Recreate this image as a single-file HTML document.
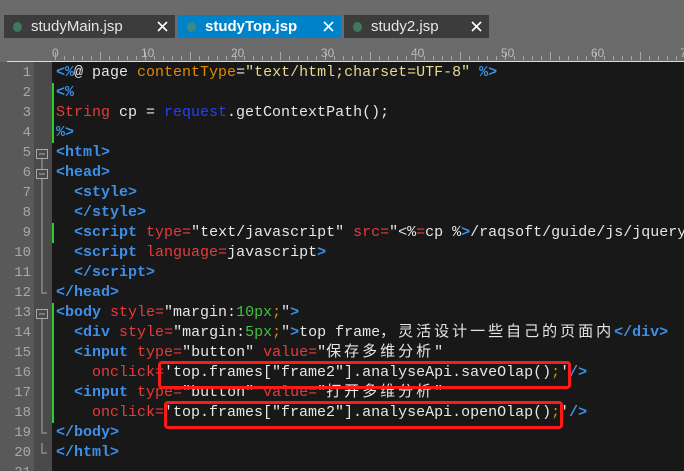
<!DOCTYPE html>
<html><head><meta charset="utf-8"><style>
html,body{margin:0;width:684px;height:471px;overflow:hidden}
body{background:#6b6b6b;font-family:"Liberation Sans","Noto Sans CJK SC",sans-serif;position:relative}
.tab{position:absolute;top:15px;height:23px;background:#3c3c3c;color:#e6e6e6;font-size:15px;line-height:23px}
.tab .dot{position:absolute;left:9px;top:7px;width:9px;height:10px;border-radius:50%;background:#3d7a5e}
.tab .t{position:absolute;left:27px}
.tab .x{position:absolute;right:7px;top:6px;width:11px;height:11px}
.act{background:#0082c8;font-weight:bold;color:#fff}
.act .dot{background:#3a8a8a}
#gut{position:absolute;left:0;top:62px;width:34px;height:409px;background:#595959}
#fold{position:absolute;left:34px;top:62px;width:18px;height:409px;background:#4a4a4a}
#code{position:absolute;left:52px;top:62px;width:632px;height:409px;background:#181818}
.ln{position:absolute;left:0;top:63px;width:31px;height:408px;overflow:hidden;text-align:right;color:#a8a8a8;font-family:"Liberation Mono",monospace;font-size:14px;line-height:20px}
.l{position:absolute;left:56px;white-space:pre;font-family:"Liberation Mono","Noto Sans CJK SC",monospace;font-size:15px;line-height:20px;color:#e6e6e6}
.tg{color:#3d8fe8;font-weight:bold}.a{color:#e83a3a}.o{color:#e08a00}.y{color:#e8d890}.g{color:#3fc43f}.b{color:#2440ff}.c{letter-spacing:3px}
.bar{position:absolute;left:52px;width:2px;background:#2ecc2e}
.box{position:absolute;border:3px solid #ff1a1a;border-radius:4px}
</style></head><body>
<div class="tab" style="left:4px;width:171px"><span class="dot"></span><span class="t">studyMain.jsp</span><svg class="x" viewBox="0 0 11 11"><path d="M1 1L10 10M10 1L1 10" stroke="#fff" stroke-width="1.6"/></svg></div>
<div class="tab act" style="left:178px;width:163px"><span class="dot"></span><span class="t">studyTop.jsp</span><svg class="x" viewBox="0 0 11 11"><path d="M1 1L10 10M10 1L1 10" stroke="#fff" stroke-width="1.6"/></svg></div>
<div class="tab" style="left:344px;width:145px"><span class="dot"></span><span class="t">study2.jsp</span><svg class="x" viewBox="0 0 11 11"><path d="M1 1L10 10M10 1L1 10" stroke="#fff" stroke-width="1.6"/></svg></div>
<svg style="position:absolute;left:0;top:40px" width="684" height="23">
<line x1="7" y1="21.5" x2="684" y2="21.5" stroke="#ddd"/>
<g fill="#bbb" font-family="Liberation Sans" font-size="12">
<text x="52" y="17">0</text><text x="141" y="17">10</text><text x="231" y="17">20</text><text x="321" y="17">30</text><text x="411" y="17">40</text><text x="501" y="17">50</text><text x="591" y="17">60</text><text x="680" y="17">7</text>
</g>
<path id="tp" stroke="#aaa" fill="none" d=""/>
</svg>
<script>
var d="";for(var i=0;i<70;i++){var x=55.5+i*9;var h=(i%5==0)?8:4;d+="M"+x+" 20V"+(20-h);}document.getElementById("tp").setAttribute("d",d);
</script>
<div id="gut"></div><div id="fold"></div><div id="code"></div>
<svg style="position:absolute;left:34px;top:62px" width="18" height="409"><g stroke="#aaa" fill="none">
<rect x="2.5" y="87.5" width="11" height="9"/><path d="M5 92H11"/>
<rect x="2.5" y="107.5" width="11" height="9"/><path d="M5 112H11"/>
<path d="M8 97V107M8 117V231H13"/>
<rect x="2.5" y="247.5" width="11" height="9"/><path d="M5 252H11"/>
<path d="M8 257V371H13M8 381V391H13"/>
</g></svg>
<div class="bar" style="top:83px;height:60px"></div>
<div class="bar" style="top:223px;height:20px"></div>
<div class="bar" style="top:303px;height:120px"></div>
<div class="ln">1<br>2<br>3<br>4<br>5<br>6<br>7<br>8<br>9<br>10<br>11<br>12<br>13<br>14<br>15<br>16<br>17<br>18<br>19<br>20<br>21</div>
<div class="l" style="top:63px"><span class="tg">&lt;%</span>@ page <span class="o">contentType</span>=<span class="y">"text/html;charset=UTF-8"</span> <span class="tg">%&gt;</span>
<span class="tg">&lt;%</span>
<span class="a">String</span> cp = <span class="b">request</span>.getContextPath();
<span class="tg">%&gt;</span>
<span class="tg">&lt;html&gt;</span>
<span class="tg">&lt;head&gt;</span>
  <span class="tg">&lt;style&gt;</span>
  <span class="tg">&lt;/style&gt;</span>
  <span class="tg">&lt;script</span> <span class="a">type=</span>"text/javascript" <span class="a">src=</span>"&lt;%<span class="a">=</span>cp %<span class="tg">&gt;</span>/raqsoft/guide/js/jquery
  <span class="tg">&lt;script</span> <span class="a">language=</span>javascript<span class="tg">&gt;</span>
  <span class="tg">&lt;/script&gt;</span>
<span class="tg">&lt;/head&gt;</span>
<span class="tg">&lt;body</span> <span class="a">style=</span>"margin:<span class="g">10px</span><span class="o">;</span>"<span class="tg">&gt;</span>
  <span class="tg">&lt;div</span> <span class="a">style=</span>"margin:<span class="g">5px</span><span class="o">;</span>"<span class="tg">&gt;</span>top frame<span class="c">，灵活设计一些自己的页面内</span><span class="tg">&lt;/div&gt;</span>
  <span class="tg">&lt;input</span> <span class="a">type=</span>"button" <span class="a">value=</span>"<span class="c">保存多维分析</span>"
    <span class="a">onclick=</span>'top.frames["frame2"].analyseApi.saveOlap()<span class="o">;</span>'<span class="tg">/&gt;</span>
  <span class="tg">&lt;input</span> <span class="a">type=</span>"button" <span class="a">value=</span>"<span class="c">打开多维分析</span>"
    <span class="a">onclick=</span>'top.frames["frame2"].analyseApi.openOlap()<span class="o">;</span>'<span class="tg">/&gt;</span>
<span class="tg">&lt;/body&gt;</span>
<span class="tg">&lt;/html&gt;</span></div>
<div class="box" style="left:158px;top:361px;width:407px;height:22px"></div>
<div class="box" style="left:164px;top:401px;width:393px;height:22px"></div>
</body></html>
